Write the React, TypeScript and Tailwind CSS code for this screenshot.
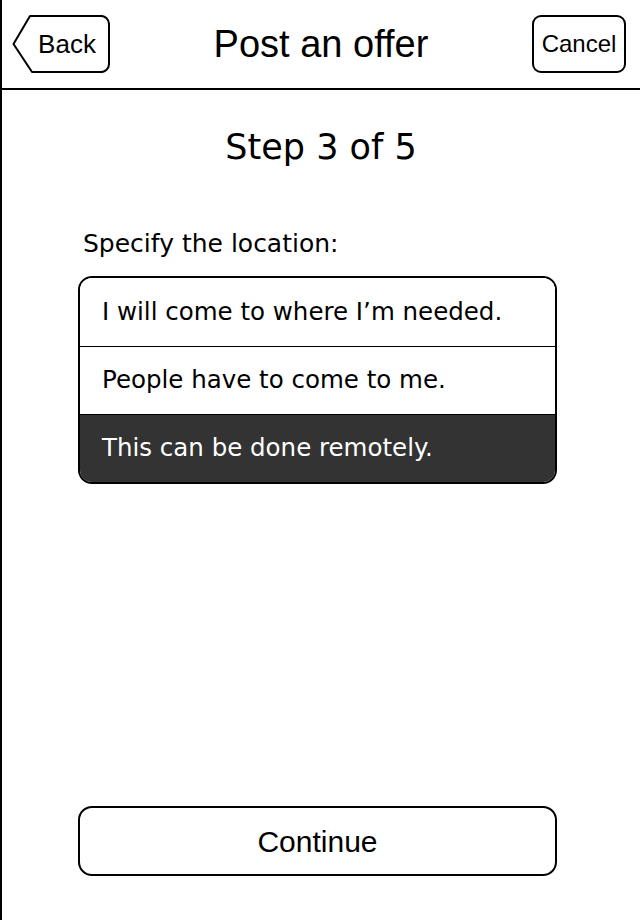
import { useState } from "react";

const options = [
  "I will come to where I’m needed.",
  "People have to come to me.",
  "This can be done remotely.",
];

function BackButton() {
  return (
    <button className="relative h-[58px] w-[98px] text-[26px] text-black">
      <svg
        className="absolute inset-0"
        width="98"
        height="58"
        viewBox="0 0 98 58"
        fill="none"
      >
        <path
          d="M18 1 H88 A8 8 0 0 1 97 9 V49 A8 8 0 0 1 88 57 H20 L1.5 29 Z"
          stroke="#000"
          strokeWidth="2"
          strokeLinejoin="round"
        />
      </svg>
      <span className="relative block pl-[12px] leading-none">Back</span>
    </button>
  );
}

export default function App() {
  const [selected, setSelected] = useState(2);

  return (
    <main
      className="flex h-[920px] w-[640px] flex-col border-l-2 border-black bg-white text-black"
      style={{ fontFamily: '"DejaVu Sans", sans-serif' }}
    >
      {/* Header */}
      <header
        className="flex h-[90px] shrink-0 items-center justify-between border-b-2 border-black pl-[10px] pr-[14px]"
        style={{ fontFamily: '"Liberation Sans", Arial, sans-serif' }}
      >
        <BackButton />
        <h1 className="text-[38px] leading-none">Post an offer</h1>
        <button className="h-[58px] w-[94px] rounded-[9px] border-2 border-black text-[24px] leading-none">
          Cancel
        </button>
      </header>

      <div className="mt-[37px] text-center text-[35px] leading-[40px]">Step 3 of 5</div>

      <div className="mt-[62px] pl-[81px] text-[25px] leading-[30px]">Specify the location:</div>

      {/* Options */}
      <div className="ml-[76px] mr-[83px] mt-[17px] overflow-hidden rounded-[14px] border-2 border-black">
        {options.map((opt, i) => (
          <button
            key={opt}
            onClick={() => setSelected(i)}
            className={`flex h-[68px] w-full items-center pl-[22px] text-left text-[24.5px] ${
              i > 0 ? "border-t border-black" : ""
            } ${selected === i ? "bg-[#333333] text-white" : "bg-white text-black"}`}
          >
            {opt}
          </button>
        ))}
      </div>

      <div className="mt-auto mb-[44px] pl-[76px] pr-[83px]">
        <button
          className="flex h-[70px] w-full items-center justify-center rounded-[14px] border-2 border-black text-[30px]"
          style={{ fontFamily: '"Liberation Sans", Arial, sans-serif' }}
        >
          Continue
        </button>
      </div>
    </main>
  );
}
